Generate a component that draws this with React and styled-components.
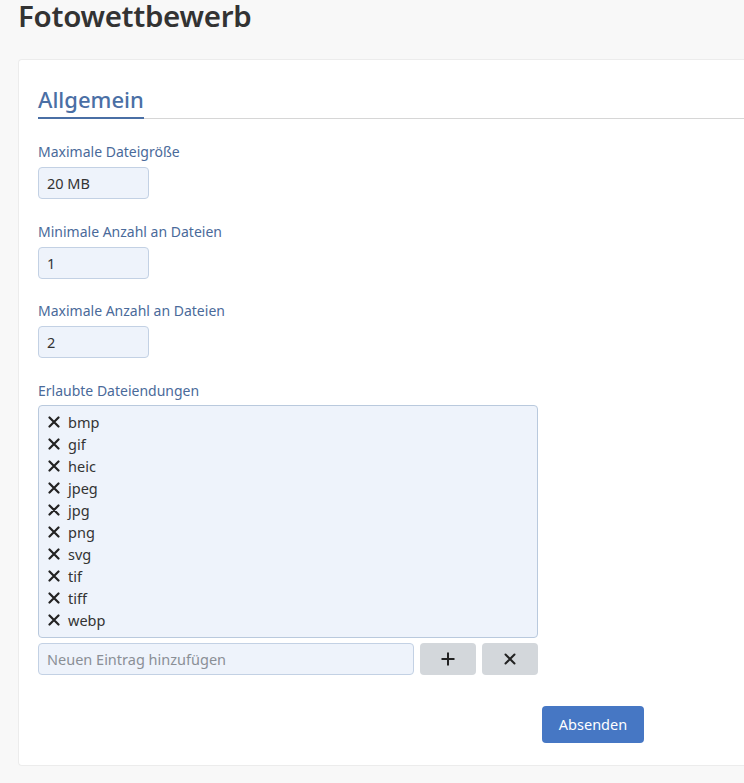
import React, { useState } from "react";
import styled, { createGlobalStyle } from "styled-components";

const GlobalStyle = createGlobalStyle`
  html, body { margin: 0; padding: 0; background: #f8f8f8; }
  body { font-family: "Noto Sans", "Open Sans", sans-serif; color: #333; overflow: hidden; }
  * { box-sizing: border-box; }
`;

const Page = styled.div`
  padding: 0 0 0 18px;
  width: 744px;
  height: 783px;
`;

const Title = styled.h1`
  margin: 0;
  height: 59px;
  font-size: 29.5px;
  line-height: 32px;
  font-weight: 600;
  color: #333;
  letter-spacing: -0.3px;
`;

const Card = styled.div`
  background: #fff;
  border: 1px solid #ececec;
  border-right: none;
  border-radius: 4px 0 0 4px;
  height: 707px;
  padding: 23px 0 0 19px;
`;

const SectionHead = styled.div`
  border-bottom: 1px solid #d6d6d6;
  display: flex;
  margin-bottom: 22px;
`;

const SectionTitle = styled.h2`
  margin: 0;
  font-size: 22px;
  line-height: 32px;
  font-weight: 500;
  color: #4a6fa5;
  padding-bottom: 2px;
  border-bottom: 2px solid #4a6fa5;
  margin-bottom: -1px;
`;

const Field = styled.div`
  display: flex;
  flex-direction: column;
  margin-bottom: ${(p) => p.$mb ?? 21.5}px;
`;

const Label = styled.label`
  font-size: 14px;
  line-height: 22px;
  color: #4a6a9a;
  margin-bottom: 4px;
`;

const TextInput = styled.input`
  width: ${(p) => p.$w || 111}px;
  height: 32px;
  background: #eef3fb;
  border: 1px solid #c3d1e4;
  border-radius: 4px;
  font-family: inherit;
  font-size: 14.5px;
  color: #333;
  padding: 0 8px;
  outline: none;
  &::placeholder { color: #8a8f96; }
`;

const ListBox = styled.div`
  width: 500px;
  height: 233px;
  background: #eef3fb;
  border: 1px solid #b9c9dd;
  border-radius: 4px;
  padding: 6px 9px;
  display: flex;
  flex-direction: column;
  margin-top: -1px;
`;

const ListItem = styled.div`
  display: flex;
  align-items: center;
  gap: 8px;
  height: 22.3px;
  font-size: 14.5px;
  color: #333;
`;

const XIcon = styled.svg`
  flex: none;
`;

const AddRow = styled.div`
  display: flex;
  gap: 6px;
  margin-top: 5px;
  width: 500px;
`;

const GrayBtn = styled.button`
  width: 56px;
  height: 32px;
  border: none;
  border-radius: 4px;
  background: #d3d7db;
  display: flex;
  align-items: center;
  justify-content: center;
  padding: 0;
`;

const Footer = styled.div`
  width: 606px;
  display: flex;
  justify-content: flex-end;
  margin-top: 31px;
`;

const PrimaryBtn = styled.button`
  width: 102px;
  height: 37px;
  border: none;
  border-radius: 4px;
  background: #4677c4;
  color: #fff;
  font-family: inherit;
  font-size: 14.5px;
`;

const X = ({ size = 12, sw = 2.2, color = "#222" }) => (
  <XIcon viewBox="0 0 12 12" width={size} height={size}>
    <path d="M1.5 1.5 L10.5 10.5 M10.5 1.5 L1.5 10.5" stroke={color} strokeWidth={sw} strokeLinecap="round" />
  </XIcon>
);

const Plus = () => (
  <svg width="14" height="14" viewBox="0 0 14 14">
    <path d="M7 0.5 V13.5 M0.5 7 H13.5" stroke="#222" strokeWidth="2" />
  </svg>
);

export default function App() {
  const [items] = useState(["bmp", "gif", "heic", "jpeg", "jpg", "png", "svg", "tif", "tiff", "webp"]);
  return (
    <Page>
      <GlobalStyle />
      <Title>Fotowettbewerb</Title>
      <Card>
        <SectionHead>
          <SectionTitle>Allgemein</SectionTitle>
        </SectionHead>
        <Field>
          <Label>Maximale Dateigröße</Label>
          <TextInput defaultValue="20 MB" />
        </Field>
        <Field>
          <Label>Minimale Anzahl an Dateien</Label>
          <TextInput defaultValue="1" />
        </Field>
        <Field>
          <Label>Maximale Anzahl an Dateien</Label>
          <TextInput defaultValue="2" />
        </Field>
        <Field $mb={0}>
          <Label>Erlaubte Dateiendungen</Label>
          <ListBox>
            {items.map((it) => (
              <ListItem key={it}>
                <X size={12} />
                {it}
              </ListItem>
            ))}
          </ListBox>
          <AddRow>
            <TextInput $w={378} placeholder="Neuen Eintrag hinzufügen" />
            <GrayBtn><Plus /></GrayBtn>
            <GrayBtn><X size={12} sw={2} /></GrayBtn>
          </AddRow>
        </Field>
        <Footer>
          <PrimaryBtn>Absenden</PrimaryBtn>
        </Footer>
      </Card>
    </Page>
  );
}
